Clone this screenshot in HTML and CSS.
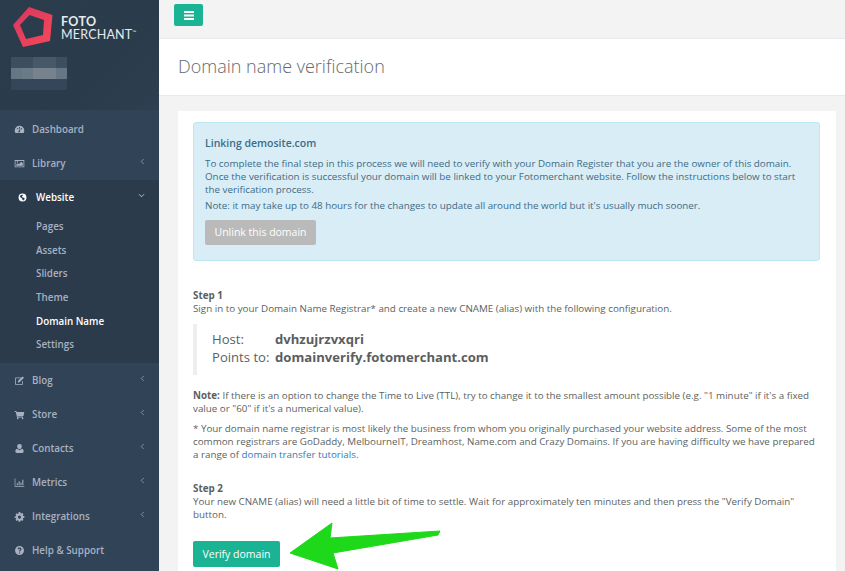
FILE: index.html
```html
<!DOCTYPE html>
<html lang="en">
<head>
<meta charset="utf-8">
<title>Domain name verification</title>
<link rel="stylesheet" href="styles.css">
</head>
<body>
<div class="app">
  <aside class="sidebar">
    <div class="brand">
      <div class="logo">
        <svg class="logo-mark" viewBox="13 7 40 40" width="40" height="40">
          <defs><linearGradient id="lg" x1="0" y1="0" x2="1" y2="1"><stop offset="0" stop-color="#d9365f"/><stop offset="1" stop-color="#f5495a"/></linearGradient></defs>
          <path d="M29 7 52.500 15 50 41 23 47 13 25Z M29.500 15 20 25 26 39 43 35 44 20Z" fill="url(#lg)" fill-rule="evenodd"/>
        </svg>
        <div class="logo-text"><span class="foto">FOTO</span><span class="merchant">MERCHANT<sup>™</sup></span></div>
      </div>
      <div class="blur">
        <i class="c1"></i><i class="c1"></i><i class="c2"></i><i class="c2"></i><i class="c1"></i>
        <i class="c3"></i><i class="c4"></i><i class="c5"></i><i class="c5"></i><i class="c3"></i>
        <i class="c6"></i><i class="c6"></i><i class="c6"></i><i class="c6"></i><i class="c6"></i>
      </div>
    </div>
    <nav class="nav">
      <a class="item"><svg class="ico" viewBox="0 0 16 16"><path d="M8 2.500A7 7 0 0 0 1 9.500c0 1.300.4 2.500 1 3.500h12c.6-1 1-2.200 1-3.500a7 7 0 0 0-7-7Zm-.7 2h1.400v2H7.300Zm-3 2 1.300-.7 1 1.500-1.300.7Zm7.400 0L10.400 5.800l-1 1.500 1.300.7ZM7 10l1.500-3 .8.300L8.500 10.500A1.200 1.200 0 1 1 7 10Z" fill-rule="evenodd"/></svg><span>Dashboard</span></a>
      <a class="item"><svg class="ico" viewBox="0 0 16 16"><path d="M1 3h14v10.500H1Zm1.200 1.200v8.100h11.600V4.200ZM3.200 11.300V9.800L5.500 7.500l1.500 1.500 3.500-3.500 2.300 2.300v3.500ZM5 7a1.100 1.100 0 1 1 0-2.200A1.100 1.100 0 0 1 5 7Z" fill-rule="evenodd"/></svg><span>Library</span><svg class="chev" viewBox="0 0 6 8"><path d="M4.500 1 1.500 4l3 3"/></svg></a>
      <div class="group">
        <a class="item active"><svg class="ico small" viewBox="0 0 16 16"><path d="M8 1a7 7 0 1 0 0 14A7 7 0 0 0 8 1ZM5 3.500 8 3l1 1.500-2 1.500 1 2 3 .5 1 2-2.500 3-1.500-1-.5-2.500L5 8 3 6.500Z" fill-rule="evenodd"/></svg><span>Website</span><svg class="chev down" viewBox="0 0 8 6"><path d="M1 1.500l3 3 3-3"/></svg></a>
        <ul class="sub">
          <li>Pages</li>
          <li>Assets</li>
          <li>Sliders</li>
          <li>Theme</li>
          <li class="current">Domain Name</li>
          <li>Settings</li>
        </ul>
      </div>
      <a class="item"><svg class="ico" viewBox="0 0 16 16"><path d="M11 3.500H3A1.500 1.500 0 0 0 1.500 5v8A1.500 1.500 0 0 0 3 14.500h8.500A1.500 1.500 0 0 0 13 13V9h-1.200v4q0 .3-.3.300H3q-.3 0-.3-.3V5q0-.3.300-.3h7ZM6 8.500 12.500 2l2 2L8 10.500l-2.500.5Z" fill-rule="evenodd"/></svg><span>Blog</span><svg class="chev" viewBox="0 0 6 8"><path d="M4.500 1 1.500 4l3 3"/></svg></a>
      <a class="item"><svg class="ico" viewBox="0 0 16 16"><path d="M1 3h2.500l.4 1.500H15l-1.200 5.500H5.300l.3 1H13v1.200H4.500L2.600 4.200H1ZM5.500 12.500a1.200 1.200 0 1 1 0 2.400 1.200 1.200 0 0 1 0-2.400Zm7 0a1.200 1.200 0 1 1 0 2.400 1.200 1.200 0 0 1 0-2.400Z"/></svg><span>Store</span><svg class="chev" viewBox="0 0 6 8"><path d="M4.500 1 1.500 4l3 3"/></svg></a>
      <a class="item"><svg class="ico" viewBox="0 0 16 16"><path d="M8 1.500a3.300 3.300 0 0 1 3.300 3.500c0 2-1.400 3.800-3.300 3.800S4.700 7 4.700 5A3.300 3.300 0 0 1 8 1.500ZM4.500 8.500Q6 10 8 10t3.500-1.500C13 8.700 14 10 14 12.500c0 1.200-.8 2-2 2H4c-1.200 0-2-.8-2-2 0-2.500 1-3.800 2.500-4Z"/></svg><span>Contacts</span><svg class="chev" viewBox="0 0 6 8"><path d="M4.500 1 1.500 4l3 3"/></svg></a>
      <a class="item"><svg class="ico" viewBox="0 0 16 16"><path d="M1 2h1v11h13v1H1Zm3 7h1.500v3H4Zm2.700-3h1.500v6H6.700Zm2.700 2h1.500v4H9.400Zm2.700-4h1.500v8h-1.500Z"/></svg><span>Metrics</span><svg class="chev" viewBox="0 0 6 8"><path d="M4.500 1 1.500 4l3 3"/></svg></a>
      <a class="item"><svg class="ico" viewBox="0 0 16 16"><path d="M6.800 1.500h2.400l.3 1.800 1.100.5 1.500-1 1.700 1.700-1 1.500.5 1.100 1.800.3v2.400l-1.800.3-.5 1.100 1 1.500-1.700 1.700-1.500-1-1.100.5-.3 1.800H6.800l-.3-1.800-1.100-.5-1.500 1-1.700-1.700 1-1.500-.5-1.100-1.800-.3V7.900l1.800-.3.500-1.100-1-1.500 1.700-1.700 1.500 1 1.100-.5ZM8 6.500a2.300 2.300 0 1 0 0 4.600 2.300 2.300 0 0 0 0-4.600Z" fill-rule="evenodd"/></svg><span>Integrations</span><svg class="chev" viewBox="0 0 6 8"><path d="M4.500 1 1.500 4l3 3"/></svg></a>
      <a class="item"><svg class="ico" viewBox="0 0 16 16"><path d="M8 1.500a6.500 6.500 0 1 0 0 13 6.500 6.500 0 0 0 0-13Zm-.9 9.300h1.800v1.700H7.100Zm0-1.200c0-2 2-2 2-3.300 0-.6-.5-1-1.100-1-.7 0-1.100.4-1.300 1.100l-1.500-.6C5.500 4.300 6.600 3.600 8 3.600c1.700 0 2.900 1 2.900 2.600 0 2-2 2.100-2 3.400Z" fill-rule="evenodd"/></svg><span>Help &amp; Support</span></a>
    </nav>
  </aside>
  <main class="main">
    <header class="topbar">
      <button class="menu-btn" aria-label="Menu"><svg viewBox="0 0 10 9" width="10" height="9"><path d="M0 0h10v2H0Zm0 3.500h10v2H0ZM0 7h10v2H0Z"/></svg></button>
    </header>
    <section class="heading"><h1>Domain name verification</h1></section>
    <section class="content">
      <div class="card">
        <div class="alert">
          <h3>Linking demosite.com</h3>
          <p>To complete the final step in this process we will need to verify with your Domain Register that you are the owner of this domain. Once the verification is successful your domain will be linked to your Fotomerchant website. Follow the instructions below to start the verification process.</p>
          <p>Note: it may take up to 48 hours for the changes to update all around the world but it's usually much sooner.</p>
          <button class="btn-grey">Unlink this domain</button>
        </div>
        <div class="step first">
          <strong>Step 1</strong>
          <p>Sign in to your Domain Name Registrar* and create a new CNAME (alias) with the following configuration.</p>
        </div>
        <blockquote class="config">
          <div class="row"><span class="lbl">Host:</span><b>dvhzujrzvxqri</b></div>
          <div class="row"><span class="lbl">Points to:</span><b>domainverify.fotomerchant.com</b></div>
        </blockquote>
        <p class="para"><strong>Note:</strong> If there is an option to change the Time to Live (TTL), try to change it to the smallest amount possible (e.g. "1 minute" if it's a fixed value or "60" if it's a numerical value).</p>
        <p class="para">* Your domain name registrar is most likely the business from whom you originally purchased your website address. Some of the most common registrars are GoDaddy, MelbourneIT, Dreamhost, Name.com and Crazy Domains. If you are having difficulty we have prepared a range of <a class="link">domain transfer tutorials</a>.</p>
        <div class="step second">
          <strong>Step 2</strong>
          <p>Your new CNAME (alias) will need a little bit of time to settle. Wait for approximately ten minutes and then press the "Verify Domain" button.</p>
        </div>
        <button class="btn-green">Verify domain</button>
      </div>
    </section>
  </main>
</div>
<svg class="arrow" viewBox="0 0 170 60" width="170" height="60">
  <path d="M10 38 52 8 50 23 160 16 158 20 53 38 58 54Z" fill="#1dd91a" stroke="#1dd91a" stroke-width="1" stroke-linejoin="round"/>
</svg>
</body>
</html>
```
FILE: styles.css
```css
* { box-sizing: border-box; }
html, body { margin: 0; height: 571px; overflow: hidden; }
body { font-family: "Open Sans", "Liberation Sans", sans-serif; font-size: 9.800px; line-height: 13px; color: #5c5f61; background: #f3f3f4; position: relative; }
.app { display: flex; height: 571px; }
.sidebar { width: 159px; flex: none; background: #314457; overflow: hidden; }
.brand { height: 110px; background: linear-gradient(135deg, #2b3c4d 0, #2a3b4b 60%, #2d3f50 100%); padding: 7px 11px 0 13px; }
.logo { display: flex; align-items: center; gap: 8px; }
.logo-mark { display: block; flex: none; }
.logo-text { display: flex; flex-direction: column; color: #e8eaed; font-family: Lato, "Open Sans", sans-serif; line-height: 13px; margin-top: 2px; }
.foto { font-size: 12.500px; font-weight: 700; letter-spacing: .3px; }
.merchant { font-size: 12.500px; font-weight: 400; letter-spacing: .2px; white-space: nowrap; }
.merchant sup { font-size: 5px; vertical-align: 5px; line-height: 0; }
.blur { display: grid; grid-template-columns: repeat(5, 11.200px); grid-auto-rows: 11px; margin: 10px 0 0 -2px; }
.c1 { background: #3d4f5e; }
.c2 { background: #46586a; }
.c3 { background: #667685; }
.c4 { background: #6b7a87; }
.c5 { background: #76838f; }
.c6 { background: #34475a; }
.nav { padding-top: 2px; }
.item { display: flex; align-items: center; height: 34px; padding: 0 14px; color: #a7b1c2; font-weight: 600; position: relative; }
.ico { width: 11px; height: 11px; fill: currentColor; flex: none; margin-right: 7px; }
.ico.small { width: 9px; height: 9px; margin: 0 9px 0 4px; }
.item .chev { position: absolute; right: 14px; top: 12px; width: 5px; height: 7px; fill: none; stroke: currentColor; stroke-width: .8; }
.item .chev.down { width: 7px; height: 5px; right: 14px; top: 13px; }
.group { background: #2b3b4c; padding-bottom: 6px; }
.active { color: #fff; }
.sub { list-style: none; margin: 0; padding: 1px 0 0 36px; color: #a7b1c2; font-weight: 600; }
.sub li { height: 23.700px; line-height: 23.700px; }
.sub .current { color: #fff; }
.main { flex: 1; min-width: 0; display: flex; flex-direction: column; }
.topbar { flex: none; height: 39px; border-bottom: 1px solid #e7eaec; padding: 4px 0 0 15px; }
.menu-btn { width: 29px; height: 22px; border: 0; border-radius: 2px; background: #1ab394; padding: 0; display: flex; align-items: center; justify-content: center; }
.menu-btn svg { fill: #fff; display: block; }
.heading { flex: none; height: 57px; background: #fff; border-bottom: 1px solid #e7eaec; padding: 0 0 0 19px; display: flex; align-items: center; }
h1 { margin: 0; font-size: 18px; font-weight: 300; color: #676a6c; line-height: 1.1; }
.content { flex: none; padding: 15px 9px 0 19px; }
.card { background: #fff; padding: 11px 16px 0 15px; height: 480px; }
.alert { height: 139px; background: #d9edf7; border: 1px solid #bce8f1; border-radius: 3px; padding: 14px 12px 0 11px; color: #3d6b85; }
.alert h3 { margin: 0 0 7px; font-size: 10.500px; font-weight: 600; line-height: 13px; }
.alert p { margin: 0 0 3px; }
.btn-grey { display: block; margin-top: 8px; width: 111px; height: 25px; border: 0; border-radius: 2px; background: #bababa; color: #fff; font: 400 10.500px "Open Sans", sans-serif; padding: 0 0 2px; }
.step strong, .para strong { font-weight: 700; }
.step p { margin: 0; }
.step.first { margin-top: 28px; }
.config { margin: 9px 0 0; border-left: 4px solid #eee; padding: 0 0 4px 15px; height: 51px; display: flex; flex-direction: column; justify-content: center; font-size: 13.100px; line-height: 18px; }
.row { display: flex; }
.lbl { width: 63px; flex: none; }
.row b { font-weight: 700; color: #5b5e60; }
.para { margin: 14px 0 0; }
.para + .para { margin-top: 7px; }
.link { color: #337ab7; }
.step.second { margin-top: 21px; }
.step.second strong { display: block; }
.btn-green { display: block; margin-top: 20px; width: 87px; height: 26px; border: 0; border-radius: 2px; background: #1ab394; color: #fff; font: 400 10.500px "Open Sans", sans-serif; padding: 0; }
.arrow { position: absolute; left: 280px; top: 515px; }
```
